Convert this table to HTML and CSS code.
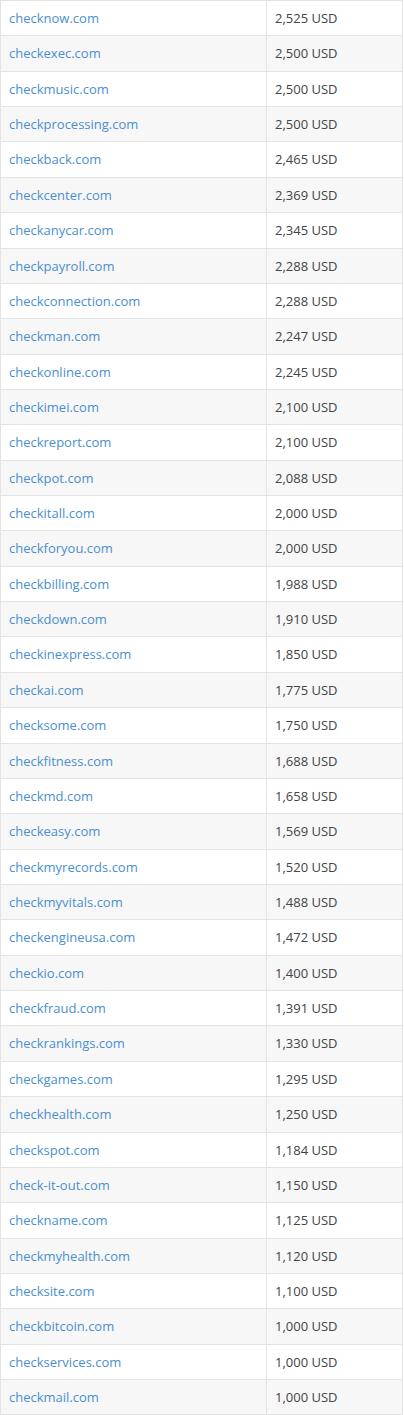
FILE: index.html
```html
<!DOCTYPE html>
<html>
<head>
<meta charset="utf-8">
<link rel="stylesheet" href="styles.css">
</head>
<body>
<table class="domains">
<tbody>
<tr><td><a href="#">checknow.com</a></td><td>2,525 USD</td></tr>
<tr><td><a href="#">checkexec.com</a></td><td>2,500 USD</td></tr>
<tr><td><a href="#">checkmusic.com</a></td><td>2,500 USD</td></tr>
<tr><td><a href="#">checkprocessing.com</a></td><td>2,500 USD</td></tr>
<tr><td><a href="#">checkback.com</a></td><td>2,465 USD</td></tr>
<tr><td><a href="#">checkcenter.com</a></td><td>2,369 USD</td></tr>
<tr><td><a href="#">checkanycar.com</a></td><td>2,345 USD</td></tr>
<tr><td><a href="#">checkpayroll.com</a></td><td>2,288 USD</td></tr>
<tr><td><a href="#">checkconnection.com</a></td><td>2,288 USD</td></tr>
<tr><td><a href="#">checkman.com</a></td><td>2,247 USD</td></tr>
<tr><td><a href="#">checkonline.com</a></td><td>2,245 USD</td></tr>
<tr><td><a href="#">checkimei.com</a></td><td>2,100 USD</td></tr>
<tr><td><a href="#">checkreport.com</a></td><td>2,100 USD</td></tr>
<tr><td><a href="#">checkpot.com</a></td><td>2,088 USD</td></tr>
<tr><td><a href="#">checkitall.com</a></td><td>2,000 USD</td></tr>
<tr><td><a href="#">checkforyou.com</a></td><td>2,000 USD</td></tr>
<tr><td><a href="#">checkbilling.com</a></td><td>1,988 USD</td></tr>
<tr><td><a href="#">checkdown.com</a></td><td>1,910 USD</td></tr>
<tr><td><a href="#">checkinexpress.com</a></td><td>1,850 USD</td></tr>
<tr><td><a href="#">checkai.com</a></td><td>1,775 USD</td></tr>
<tr><td><a href="#">checksome.com</a></td><td>1,750 USD</td></tr>
<tr><td><a href="#">checkfitness.com</a></td><td>1,688 USD</td></tr>
<tr><td><a href="#">checkmd.com</a></td><td>1,658 USD</td></tr>
<tr><td><a href="#">checkeasy.com</a></td><td>1,569 USD</td></tr>
<tr><td><a href="#">checkmyrecords.com</a></td><td>1,520 USD</td></tr>
<tr><td><a href="#">checkmyvitals.com</a></td><td>1,488 USD</td></tr>
<tr><td><a href="#">checkengineusa.com</a></td><td>1,472 USD</td></tr>
<tr><td><a href="#">checkio.com</a></td><td>1,400 USD</td></tr>
<tr><td><a href="#">checkfraud.com</a></td><td>1,391 USD</td></tr>
<tr><td><a href="#">checkrankings.com</a></td><td>1,330 USD</td></tr>
<tr><td><a href="#">checkgames.com</a></td><td>1,295 USD</td></tr>
<tr><td><a href="#">checkhealth.com</a></td><td>1,250 USD</td></tr>
<tr><td><a href="#">checkspot.com</a></td><td>1,184 USD</td></tr>
<tr><td><a href="#">check-it-out.com</a></td><td>1,150 USD</td></tr>
<tr><td><a href="#">checkname.com</a></td><td>1,125 USD</td></tr>
<tr><td><a href="#">checkmyhealth.com</a></td><td>1,120 USD</td></tr>
<tr><td><a href="#">checksite.com</a></td><td>1,100 USD</td></tr>
<tr><td><a href="#">checkbitcoin.com</a></td><td>1,000 USD</td></tr>
<tr><td><a href="#">checkservices.com</a></td><td>1,000 USD</td></tr>
<tr><td><a href="#">checkmail.com</a></td><td>1,000 USD</td></tr>
</tbody>
</table>
</body>
</html>
```

FILE: styles.css
```css
html, body {
  margin: 0;
  padding: 0;
  background: #ffffff;
}
body {
  font-family: "Open Sans", "Liberation Sans", sans-serif;
  font-size: 13px;
  color: #444444;
}
.domains {
  width: 403px;
  border-collapse: collapse;
  border: 1px solid #e3e3e3;
}
.domains td {
  border: 1px solid #e3e3e3;
  padding: 8px 8px;
  height: 18.36px;
  line-height: 18.36px;
  vertical-align: middle;
  text-align: left;
}
.domains td:first-child {
  width: 249px;
}
.domains tr:nth-child(even) td {
  background: #f7f7f7;
}
.domains a {
  color: #4a8fcf;
  text-decoration: none;
}
```
